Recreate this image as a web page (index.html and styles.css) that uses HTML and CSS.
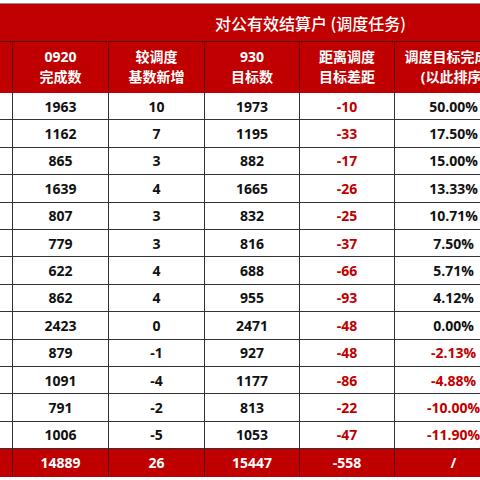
FILE: index.html
```html
<!DOCTYPE html>
<html lang="zh-CN">
<head>
<meta charset="utf-8">
<title>对公有效结算户（调度任务）</title>
<link rel="stylesheet" href="styles.css">
</head>
<body>
<div class="viewport">
  <div class="sheet">
    <div class="cell head-top blank span-2"></div>
    <div class="cell head-top title span-4">对公有效结算户 (调度任务)</div>

    <div class="cell head"></div>
    <div class="cell head">0920<br>完成数</div>
    <div class="cell head">较调度<br>基数新增</div>
    <div class="cell head">930<br>目标数</div>
    <div class="cell head">距离调度<br>目标差距</div>
    <div class="cell head">调度目标完成率<br>(以此排序)</div>

    <div class="cell"></div><div class="cell">1963</div><div class="cell">10</div><div class="cell">1973</div><div class="cell neg">-10</div><div class="cell">50.00%</div>
    <div class="cell"></div><div class="cell">1162</div><div class="cell">7</div><div class="cell">1195</div><div class="cell neg">-33</div><div class="cell">17.50%</div>
    <div class="cell"></div><div class="cell">865</div><div class="cell">3</div><div class="cell">882</div><div class="cell neg">-17</div><div class="cell">15.00%</div>
    <div class="cell"></div><div class="cell">1639</div><div class="cell">4</div><div class="cell">1665</div><div class="cell neg">-26</div><div class="cell">13.33%</div>
    <div class="cell"></div><div class="cell">807</div><div class="cell">3</div><div class="cell">832</div><div class="cell neg">-25</div><div class="cell">10.71%</div>
    <div class="cell"></div><div class="cell">779</div><div class="cell">3</div><div class="cell">816</div><div class="cell neg">-37</div><div class="cell">7.50%</div>
    <div class="cell"></div><div class="cell">622</div><div class="cell">4</div><div class="cell">688</div><div class="cell neg">-66</div><div class="cell">5.71%</div>
    <div class="cell"></div><div class="cell">862</div><div class="cell">4</div><div class="cell">955</div><div class="cell neg">-93</div><div class="cell">4.12%</div>
    <div class="cell"></div><div class="cell">2423</div><div class="cell">0</div><div class="cell">2471</div><div class="cell neg">-48</div><div class="cell">0.00%</div>
    <div class="cell"></div><div class="cell">879</div><div class="cell">-1</div><div class="cell">927</div><div class="cell neg">-48</div><div class="cell neg">-2.13%</div>
    <div class="cell"></div><div class="cell">1091</div><div class="cell">-4</div><div class="cell">1177</div><div class="cell neg">-86</div><div class="cell neg">-4.88%</div>
    <div class="cell"></div><div class="cell">791</div><div class="cell">-2</div><div class="cell">813</div><div class="cell neg">-22</div><div class="cell neg">-10.00%</div>
    <div class="cell"></div><div class="cell">1006</div><div class="cell">-5</div><div class="cell">1053</div><div class="cell neg">-47</div><div class="cell neg">-11.90%</div>

    <div class="cell total"></div><div class="cell total">14889</div><div class="cell total">26</div><div class="cell total">15447</div><div class="cell total">-558</div><div class="cell total">/</div>
  </div>
</div>
</body>
</html>
```

FILE: styles.css
```css
html, body {
  margin: 0;
  padding: 0;
  background: #ffffff;
}

.viewport {
  width: 480px;
  height: 480px;
  overflow: hidden;
  background: #ffffff;
}

.sheet {
  margin-top: 3px;
  margin-left: -83px;
  width: 596px;
  display: grid;
  grid-template-columns: 96px 96px 96px 95px 95px 118px;
  grid-template-rows: 38px 51px repeat(13, 27.4px) 28px;
  border-top: 1px solid #8c8c8c;
  font-family: "Open Sans", "Noto Sans CJK SC", sans-serif;
  font-weight: 700;
  font-size: 14px;
  color: #111111;
}

.cell {
  box-sizing: border-box;
  display: flex;
  align-items: center;
  justify-content: center;
  text-align: center;
  border-right: 1px solid #333333;
  border-bottom: 1px solid #333333;
  white-space: nowrap;
}

.span-2 { grid-column: span 2; }
.span-4 { grid-column: span 4; }

.head-top {
  background: #c00000;
  color: #ffffff;
  border-right-color: #c00000;
  border-bottom-color: #5a0a0a;
  font-family: "Noto Sans CJK SC", sans-serif;
  font-size: 16px;
  font-weight: 500;
}

.head {
  background: #c00000;
  color: #ffffff;
  border-right-color: #5a0a0a;
  border-bottom-color: #c00000;
  line-height: 20px;
  font-family: "Open Sans", "Noto Sans CJK SC", sans-serif;
  font-weight: 700;
}

.neg {
  color: #c00000;
}

.total {
  background: #c00000;
  color: #ffffff;
  border-right-color: #5a0a0a;
  border-bottom-color: #c00000;
}
```
